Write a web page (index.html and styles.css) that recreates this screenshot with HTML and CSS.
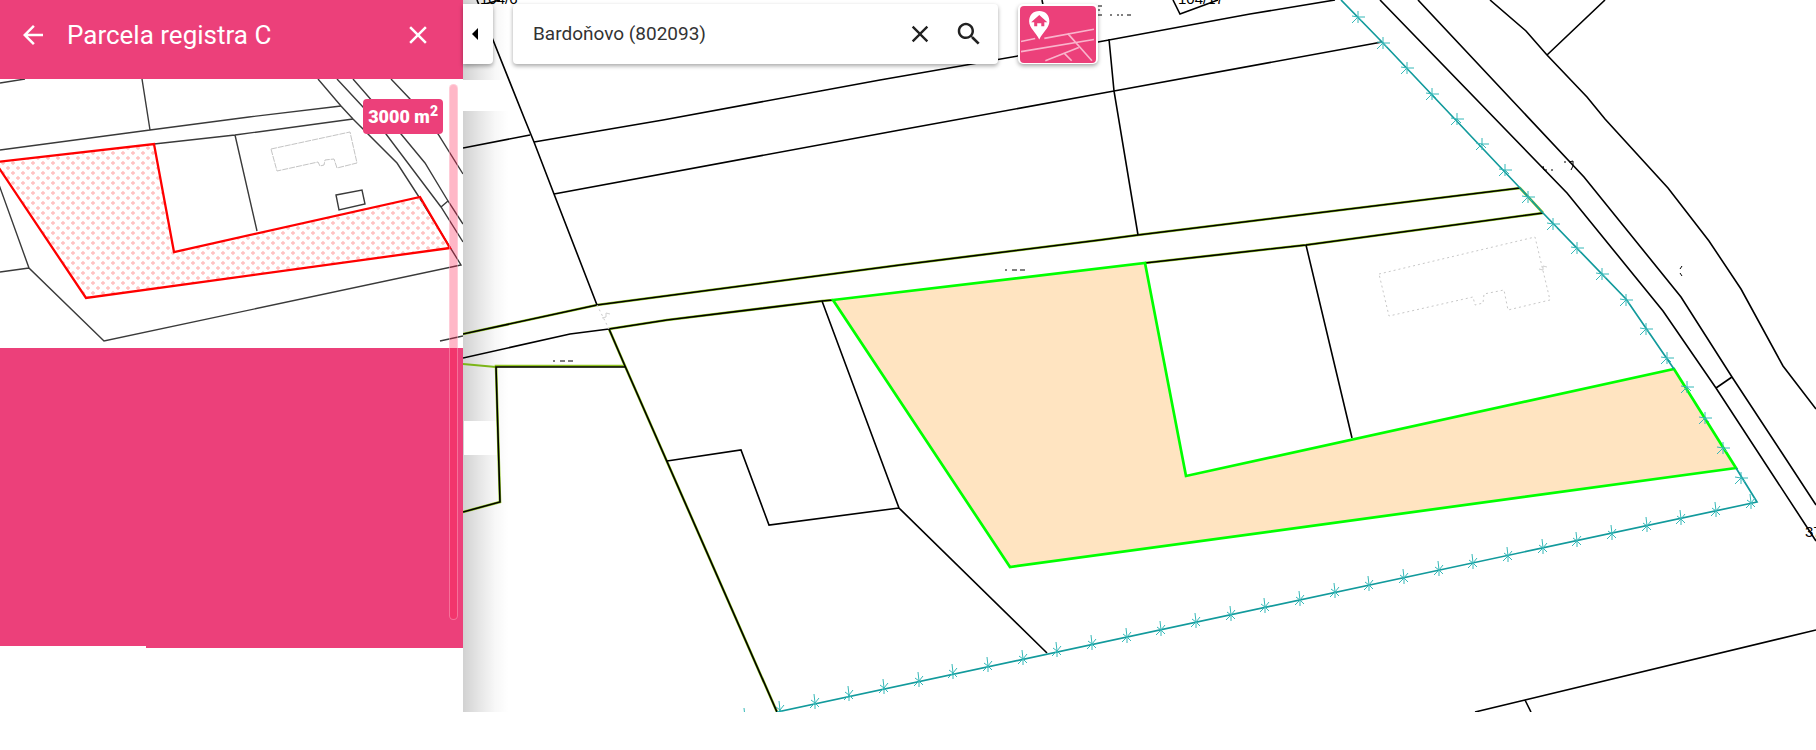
FILE: index.html
```
<!DOCTYPE html>
<html lang="sk">
<head>
    <meta charset="UTF-8">
    <meta name="viewport" content="width=device-width, initial-scale=1.0">
    <title>Parcela registra C</title>
    <link rel="stylesheet" href="styles.css">
</head>
<body>
    <div class="layout">
        <aside class="sidebar">
            <header class="sidebar-header">
                <button type="button" class="icon-button" aria-label="Späť">
                    <svg class="icon" viewBox="0 0 24 24"><path d="M20 11H7.83l5.59-5.59L12 4l-8 8 8 8 1.41-1.41L7.83 13H20v-2z"/></svg>
                </button>
                <h1>Parcela registra C</h1>
                <button type="button" class="icon-button" aria-label="Zavrieť">
                    <svg class="icon" viewBox="0 0 24 24"><path d="M19 6.41L17.59 5 12 10.59 6.41 5 5 6.41 10.59 12 5 17.59 6.41 19 12 13.41 17.59 19 19 17.59 13.41 12z"/></svg>
                </button>
            </header>
            <div class="preview">
                <svg class="preview-map" viewBox="0 79 463 269">
                    <defs>
                        <pattern id="crosses" width="10" height="10" patternUnits="userSpaceOnUse">
                            <path d="M1 3h4M3 1v4M6 8h4M8 6v4" stroke="#ffbdbd" stroke-width="1.3"/>
                        </pattern>
                    </defs>
                    <g class="preview-line">
                        <path d="M0 83L25 79M142 79L150 130M0 150L150 130L249 117L341 106M154 144L235 135L353 119M235 135L257 231"/>
                        <path d="M318 79L341 106L353 119L397 163L419 197L461 265L104 341L29 268L-2 182M29 268L0 272"/>
                        <path d="M337 79L363 107L386 134L441 207L463 242M353 79L401 134L425 163L448 201L463 224M441 207L448 201"/>
                        <path d="M391 79L410 99L438 134L463 174M440 341L463 336"/>
                        <path d="M336 195L362 190L365 204L339 210Z"/>
                    </g>
                    <path class="preview-building" d="M271 149L350 132L357 163L337 168L334 159L325 160L324 165L320 166L318 162L277 171Z"/>
                    <path class="preview-parcel" fill="url(#crosses)" d="M-3 162L154 144L174 252L420 197L450 248L86 298L-3 165Z"/>
                </svg>
                <span class="area">3000 m<sup>2</sup></span>
            </div>
            <div class="sidebar-body"></div>
            <div class="sidebar-edge"></div>
            <div class="scroll-thumb"></div>
        </aside>

        <main class="map">
            <svg class="map-canvas" viewBox="463 0 1353 712">
                <defs>
                    <linearGradient id="shade">
                        <stop offset="0" stop-color="#000" stop-opacity=".18"/>
                        <stop offset=".35" stop-color="#000" stop-opacity=".1"/>
                        <stop offset=".7" stop-color="#000" stop-opacity=".03"/>
                        <stop offset="1" stop-color="#000" stop-opacity="0"/>
                    </linearGradient>
                    <marker id="star-side" viewBox="-10 -10 20 20" markerWidth="20" markerHeight="20" markerUnits="userSpaceOnUse">
                        <path class="star" d="M0 -6V6M0 0H7M0 0L-6 6M0 0L-6 -1M0 0L4 4"/>
                    </marker>
                    <marker id="star-bottom" viewBox="-10 -10 20 20" markerWidth="20" markerHeight="20" markerUnits="userSpaceOnUse">
                        <path class="star" d="M0 0L-1 -9M0 0L4 -5M0 0L-5 5M0 0L0 6M0 0L4 4M0 0L-4 -3"/>
                    </marker>
                </defs>

                <!-- shade of the side panel -->
                <rect x="463" y="0" width="46" height="712" fill="url(#shade)"/>
                <rect x="463" y="80" width="48" height="31" fill="#fff"/>
                <rect x="464" y="421" width="33" height="34" fill="#fff"/>

                <!-- roads with a green edge -->
                <g class="edge">
                    <path d="M463 334L597 305L900 265L1100 240L1138 235L1520 188L1543 213"/>
                    <path d="M609 329L667 320L822 301L833 300M1145 263L1306 245L1543 213M609 329L625 366L777 712"/>
                    <path d="M625 366H496L500 502L463 512"/>
                </g>
                <path class="edge-only" d="M463 364L496 367"/>

                <g class="line">
                    <path d="M477 0L493 40L525 120L534 142L554 194L597 305M463 148L530 135"/>
                    <path d="M534 142L663 120L880 80L1098 42L1250 14L1335 0M554 194L900 130L1114 91L1382 42M1109 39L1114 91L1138 235"/>
                    <path d="M463 334L597 305L900 265L1100 240L1138 235L1520 188"/>
                    <path d="M463 358L570 334L609 329L667 320L822 301L833 300M1145 263L1306 245L1543 213"/>
                    <path d="M609 329L625 366L777 712M625 367H496L500 502L463 512"/>
                    <path d="M822 301L899 508L1047 653M667 461L741 450L769 525L899 508M1306 245L1352 438"/>
                    <path d="M1380 0L1567 193L1663 311L1716 388L1816 541M1418 0L1584 177L1681 297L1732 377L1782 453L1816 505M1716 388L1732 377"/>
                    <path d="M1490 0L1526 31L1547 55L1587 97L1605 119L1668 188L1709 241L1741 289L1783 366L1816 409M1547 55L1605 0"/>
                    <path d="M1475 712L1525 700L1816 630M1525 700L1531 712M1173 0L1180 14L1218 0M1042 0L1043 5M485 4L500 0"/>
                </g>

                <path class="building" d="M1379 274L1535 237L1550 300L1508 310L1504 290L1484 294L1483 303L1475 305L1473 297L1389 316Z"/>
                <path class="building" d="M597 305L609 329"/>
                <path class="curl" d="M602 318l4-1v-4l4 1M1539 269l4 1v-4l4 1"/>

                <path class="parcel" d="M833 300L1145 263L1186 476L1674 369L1736 468L1010 567Z"/>

                <g class="boundary">
                    <path d="M1341 0L1382 42L1520 188L1543 213L1626 299L1674 369M1736 468L1757 502L777 712"/>
                </g>
                <polyline class="stars-side" points="1341,0 1358,17 1383,43 1407,68 1432,94 1457,119 1482,144 1505,170 1528,197 1553,224 1577,248 1602,274 1626,300 1646,329 1667,358 1687,387 1705,418 1723,448 1741,478 1757,502"/>
                <polyline class="stars-bottom" points="1757,502 1751,503 1716,511 1681,519 1647,526 1612,534 1577,541 1543,548 1508,556 1473,563 1439,570 1404,578 1369,585 1335,592 1300,600 1265,607 1231,615 1196,622 1161,630 1127,637 1092,644 1057,651 1023,659 988,666 953,673 919,681 884,688 849,695 815,703 780,710 745,717 710,724"/>

                <!-- parcel numbers and the cut off remains of them -->
                <g class="number">
                    <text x="480" y="4">104/6</text>
                    <text x="1178" y="4">104/17</text>
                    <text x="1805" y="537">37</text>
                </g>
                <path class="remains" d="M553 361h2M560 361h5M568 361h5M1005 270h2M1012 270h5M1020 270h5M1098 6h4M1098 10h2M1098 15h4M1110 15h2M1117 15h2M1121 15h2M1127 15h4M1543 166l1 4h3M1551 170h2M1564 162h2M1569 162l4-1v5l-2 4M1682 266l-2 3M1680 273l2 3"/>
            </svg>

            <div class="toolbar">
                <button type="button" class="collapse" aria-label="Skryť panel">
                    <svg viewBox="0 0 6 12"><path d="M6 0L0 6l6 6z"/></svg>
                </button>
                <form class="search">
                    <input type="text" aria-label="Hľadať" value="Bardoňovo (802093)">
                    <button type="button" class="icon-button" aria-label="Vymazať">
                        <svg class="icon clear" viewBox="0 0 24 24"><path d="M19 6.41L17.59 5 12 10.59 6.41 5 5 6.41 10.59 12 5 17.59 6.41 19 12 13.41 17.59 19 19 17.59 13.41 12z"/></svg>
                    </button>
                    <button type="submit" class="icon-button" aria-label="Hľadať">
                        <svg class="icon" viewBox="0 0 24 24"><path d="M15.5 14h-.79l-.28-.27C15.41 12.59 16 11.11 16 9.5 16 5.91 13.09 3 9.5 3S3 5.91 3 9.5 5.91 16 9.5 16c1.61 0 3.09-.59 4.23-1.57l.27.28v.79l5 4.99L20.49 19l-4.99-5zm-6 0C7.01 14 5 11.99 5 9.5S7.01 5 9.5 5 14 7.01 14 9.5 11.99 14 9.5 14z"/></svg>
                    </button>
                </form>
                <button type="button" class="layers" aria-label="Mapa">
                    <svg viewBox="0 0 75 56">
                        <path class="street" d="M1 35L15 32M24 32L73 23M1 45L73 33M47 27L71 54M25 54L58 41M44 47L51 54"/>
                        <path fill="#fff" d="M19 5C13 5 9 9 9 15c0 7 7 11 10 18 3-7 10-11 10-18 0-6-4-10-10-10z"/>
                        <path fill="#ec407a" d="M19 9l8 7h-3v4h-3v-3h-4v3h-3v-4h-3z"/>
                    </svg>
                </button>
            </div>
        </main>
    </div>
</body>
</html>
```
FILE: styles.css
```
body {
    font-family: Roboto, Arial, sans-serif;
    background-color: #ffffff;
    color: #212121;
    margin: 0;
    padding: 0;
}
button {
    margin: 0;
    padding: 0;
    border: none;
    background: none;
    cursor: pointer;
}
svg {
    display: block;
}
.layout {
    display: flex;
    align-items: flex-start;
}
.sidebar {
    position: relative;
    flex: none;
    width: 463px;
}
.sidebar-header {
    display: flex;
    align-items: center;
    gap: 19px;
    box-sizing: border-box;
    height: 79px;
    padding: 0 30px 10px 18px;
    background-color: #ec407a;
    color: #ffffff;
}
.sidebar-header h1 {
    flex: 1;
    margin: 0;
    font-size: 26px;
    font-weight: 400;
    line-height: 32px;
}
.icon-button {
    color: inherit;
}
.icon {
    width: 30px;
    height: 30px;
    fill: currentColor;
}
.preview {
    position: relative;
}
.preview-map {
    width: 100%;
}
.preview-line {
    fill: none;
    stroke: #3a3a3a;
    stroke-width: 1.4;
}
.preview-building {
    fill: none;
    stroke: #c4c4c4;
    stroke-width: 1;
    stroke-dasharray: 6 1;
}
.preview-parcel {
    stroke: #ff0000;
    stroke-width: 2.3;
}
.area {
    position: absolute;
    top: 20px;
    right: 20px;
    padding: 0 5px;
    border-radius: 4px;
    background-color: #ec407a;
    color: #ffffff;
    font-size: 18px;
    font-weight: 900;
    line-height: 35px;
}
.area sup {
    font-size: 14px;
    line-height: 0;
}
.sidebar-body {
    height: 298px;
    background-color: #ec407a;
}
.sidebar-edge {
    height: 2px;
    margin-left: 146px;
    background-color: #ec407a;
}
.scroll-thumb {
    position: absolute;
    top: 84px;
    right: 5px;
    bottom: 28px;
    box-sizing: border-box;
    width: 9px;
    border: 1px solid rgba(255, 255, 255, 0.3);
    border-radius: 5px;
    background-color: rgba(255, 30, 80, 0.32);
}
.map {
    position: relative;
    flex: 1;
    min-width: 0;
}
.map-canvas {
    width: 100%;
}
.line {
    fill: none;
    stroke: #000000;
    stroke-width: 1.6;
}
.edge {
    fill: none;
    stroke: #8fc31f;
    stroke-width: 2.6;
}
.edge-only {
    stroke: #7cb518;
    stroke-width: 2;
}
.building {
    fill: none;
    stroke: #c8c8c8;
    stroke-width: 1;
    stroke-dasharray: 2 3;
}
.curl {
    fill: none;
    stroke: #d0d0d0;
}
.parcel {
    fill: #ffe4c1;
    stroke: #00ff00;
    stroke-width: 2.7;
}
.boundary {
    fill: none;
    stroke: #129a9c;
    stroke-width: 1.7;
}
.star {
    fill: none;
    stroke: #35b8b8;
    stroke-width: 1;
}
.stars-side {
    fill: none;
    marker-mid: url(#star-side);
}
.stars-bottom {
    fill: none;
    marker-mid: url(#star-bottom);
}
.number {
    font-family: "Liberation Sans", Arial, sans-serif;
    font-size: 15px;
    fill: #000000;
}
.remains {
    fill: none;
    stroke: #000000;
    stroke-width: 1;
}
.toolbar {
    position: absolute;
    top: 4px;
    left: 0;
    display: flex;
    gap: 20px;
}
.collapse {
    display: flex;
    align-items: center;
    justify-content: center;
    width: 30px;
    height: 60px;
    padding-right: 6px;
    border-radius: 0 4px 4px 0;
    background-color: #ffffff;
    box-shadow: 0 2px 4px rgba(0, 0, 0, 0.35);
}
.collapse svg {
    width: 6px;
    height: 12px;
}
.search {
    display: flex;
    align-items: center;
    gap: 20px;
    box-sizing: border-box;
    width: 485px;
    height: 60px;
    padding: 0 14px 0 20px;
    border-radius: 4px;
    background-color: #ffffff;
    box-shadow: 0 2px 4px rgba(0, 0, 0, 0.35);
}
.search input {
    flex: 1;
    min-width: 0;
    padding: 0;
    border: none;
    outline: none;
    background: none;
    color: #333333;
    font-family: inherit;
    font-size: 19px;
    line-height: 24px;
}
.search .clear {
    width: 28px;
    height: 28px;
}
.layers {
    box-sizing: border-box;
    width: 80px;
    height: 60px;
    padding: 2px;
    border-radius: 5px;
    background-color: #ffffff;
    box-shadow: 0 2px 4px rgba(0, 0, 0, 0.35);
}
.layers svg {
    width: 100%;
    border-radius: 4px;
    background-color: #ec407a;
}
.street {
    fill: none;
    stroke: #f9b4cc;
    stroke-width: 1.6;
}
```
